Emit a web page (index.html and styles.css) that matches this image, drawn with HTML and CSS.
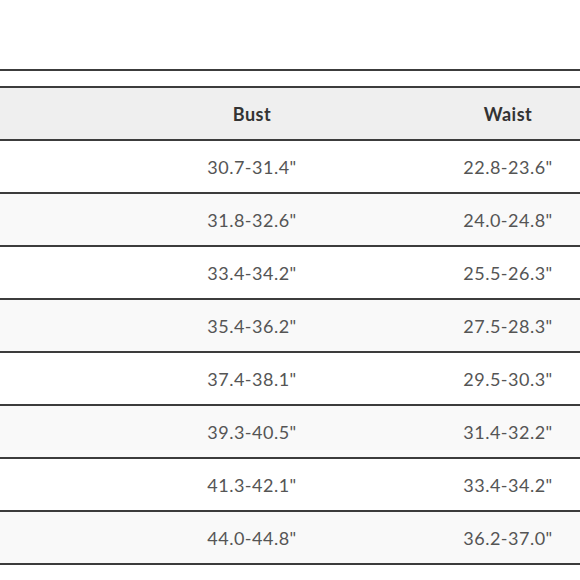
FILE: index.html
```html
<!DOCTYPE html>
<html lang="en">
<head>
<meta charset="utf-8">
<title>Size chart</title>
<link rel="stylesheet" href="styles.css">
</head>
<body>
<div class="chart">
  <div class="rule"></div>
  <table class="size-table">
    <colgroup>
      <col class="col-size">
      <col class="col-measure">
      <col class="col-measure">
    </colgroup>
    <thead>
      <tr><th></th><th>Bust</th><th>Waist</th></tr>
    </thead>
    <tbody>
      <tr><td></td><td>30.7-31.4"</td><td>22.8-23.6"</td></tr>
      <tr><td></td><td>31.8-32.6"</td><td>24.0-24.8"</td></tr>
      <tr><td></td><td>33.4-34.2"</td><td>25.5-26.3"</td></tr>
      <tr><td></td><td>35.4-36.2"</td><td>27.5-28.3"</td></tr>
      <tr><td></td><td>37.4-38.1"</td><td>29.5-30.3"</td></tr>
      <tr><td></td><td>39.3-40.5"</td><td>31.4-32.2"</td></tr>
      <tr><td></td><td>41.3-42.1"</td><td>33.4-34.2"</td></tr>
      <tr><td></td><td>44.0-44.8"</td><td>36.2-37.0"</td></tr>
    </tbody>
  </table>
</div>
</body>
</html>
```

FILE: styles.css
```css
html, body {
  margin: 0;
  padding: 0;
  background: #ffffff;
  overflow: hidden;
}

.chart {
  padding-top: 69px;
  width: 580px;
  overflow: hidden;
  font-family: "Lato", "Noto Sans", sans-serif;
}

.rule {
  height: 2px;
  background: #3c3c3c;
  margin-bottom: 15px;
}

.size-table {
  border-collapse: collapse;
  table-layout: fixed;
  width: 636px;
}

.col-size { width: 124px; }
.col-measure { width: 256px; }

.size-table th,
.size-table td {
  height: 51px;
  padding: 0;
  text-align: center;
  vertical-align: middle;
  border-top: 2px solid #3c3c3c;
  border-bottom: 2px solid #3c3c3c;
  letter-spacing: 0.5px;
}

.size-table th {
  background: #efefef;
  color: #333333;
  font-weight: 700;
  font-size: 18px;
}

.size-table td {
  color: #555555;
  font-size: 18px;
  font-weight: 400;
}

.size-table tbody tr:nth-child(even) td {
  background: #f9f9f9;
}
```
